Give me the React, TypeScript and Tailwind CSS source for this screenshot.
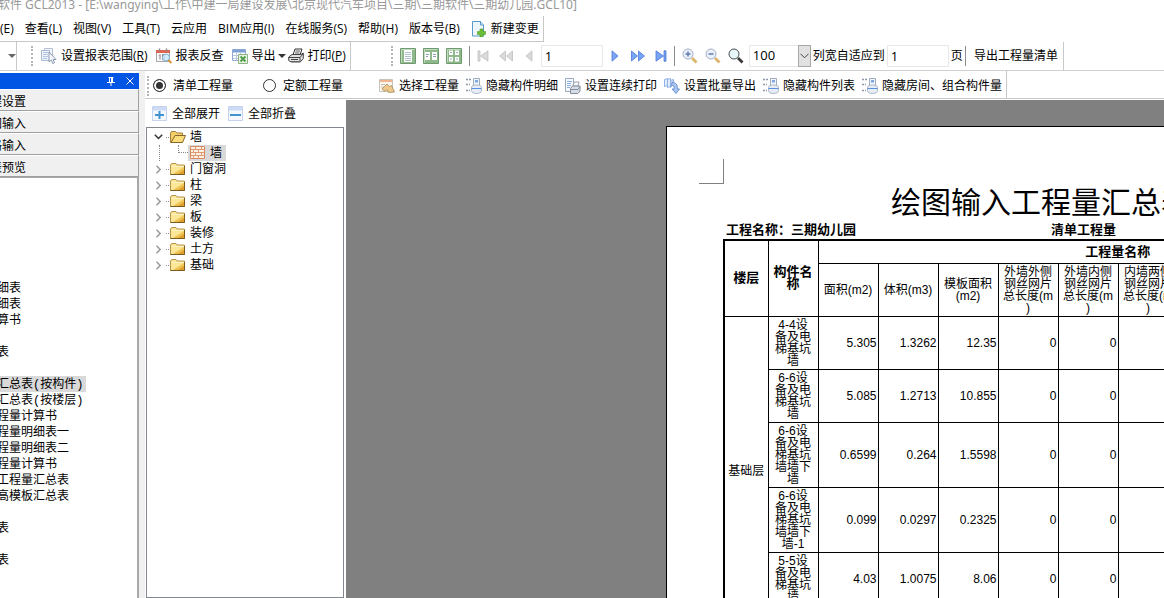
import { useState, type ReactNode } from 'react';
import { clsx } from 'clsx';

const MENU = ['(E)', '查看(L)', '视图(V)', '工具(T)', '云应用', 'BIM应用(I)', '在线服务(S)', '帮助(H)', '版本号(B)'];

const SECTIONS = ['程设置', '图输入', '格输入', '表预览'];

// Empty strings are the group headings, scrolled out to the left
const REPORTS = [
  '细表', '细表', '算书', '', '表', '', '汇总表(按构件)', '汇总表(按楼层)', '程量计算书', '程量明细表一',
  '程量明细表二', '程量计算书', '工程量汇总表', '高模板汇总表', '', '表', '', '表',
];

const TREE = ['门窗洞', '柱', '梁', '板', '装修', '土方', '基础'];

const COLUMNS = [
  '面积(m2)',
  '体积(m3)',
  '模板面积\n(m2)',
  '外墙外侧\n钢丝网片\n总长度(m\n)',
  '外墙内侧\n钢丝网片\n总长度(m\n)',
  '内墙两侧\n钢丝网片\n总长度(m\n)',
];

const ROWS = [
  { name: '4-4设\n备及电\n梯基坑\n墙', values: ['5.305', '1.3262', '12.35', '0', '0'] },
  { name: '6-6设\n备及电\n梯基坑\n墙', values: ['5.085', '1.2713', '10.855', '0', '0'] },
  { name: '6-6设\n备及电\n梯基坑\n墙墙下\n墙', values: ['0.6599', '0.264', '1.5598', '0', '0'] },
  { name: '6-6设\n备及电\n梯基坑\n墙墙下\n墙-1', values: ['0.099', '0.0297', '0.2325', '0', '0'] },
  { name: '5-5设\n备及电\n梯基坑\n墙', values: ['4.03', '1.0075', '8.06', '0', '0'] },
];

const DATA_COLUMNS = 10;

function Svg({ children, className = 'size-4' }: { children: ReactNode; className?: string }) {
  return (
    <svg viewBox="0 0 16 16" className={clsx('shrink-0', className)} fill="none" aria-hidden="true">
      {children}
    </svg>
  );
}

function RangeIcon() {
  return (
    <Svg>
      <path d="M3.500.5h8v9h-8z" fill="#f3f6fb" stroke="#b4c0d4" />
      <path d="M.5 2.500h8v10h-8z" fill="#eef3fa" stroke="#a9b8d0" />
      <path d="M2 4.500h5M2 6.500h5M2 8.500h5M2 10.500h4" stroke="#b3c5e2" />
      <path d="M8 4v10l2.200-2 1.500 3.500 1.800-.8-1.500-3.200h3z" fill="#f4f7fb" stroke="#8291ab" strokeWidth=".9" />
    </Svg>
  );
}

function ReviewIcon() {
  return (
    <Svg>
      <path d="M.5 2.500h13v11H.5z" fill="#fbfbfb" stroke="#a5a5a5" />
      <path d="M0 2h14v3H0z" fill="#e0654d" />
      <path d="M3.500.5v3M10.500.5v3" stroke="#8b8b8b" strokeWidth="1.500" />
      <path d="M3 7.500l1-1v5M6.500 6.500h2v5h-2z" stroke="#8e7575" />
      <circle cx="10" cy="9.500" r="3.500" fill="#cfeaf9" fillOpacity=".9" stroke="#7fb4d8" />
      <path d="M12.500 12l2.800 3" stroke="#dd9434" strokeWidth="2" />
    </Svg>
  );
}

function ExportIcon() {
  return (
    <Svg>
      <path d="M.5 1.500h13v11H.5z" fill="#fff" stroke="#8fa9d2" />
      <path d="M1 2h12v2.500H1z" fill="#7c9fd6" />
      <path d="M1 7.500h12M1 10.500h12M4.500 4.500v8M8.500 4.500v8" stroke="#b6c6e0" />
      <path d="M6.500 6.500h9v9h-9z" fill="#e9f4e4" stroke="#8bb47f" />
      <path d="M8.500 8.500l5 5M13.500 8.500l-5 5" stroke="#4f9a49" strokeWidth="1.800" />
    </Svg>
  );
}

function PrinterIcon() {
  return (
    <Svg>
      <path d="M5 7l2-6h7l-2 6z" fill="#fff" stroke="#333" />
      <path d="M7.500 3h4.500M7 5h4.500" stroke="#555" />
      <path d="M.7 9l3.300-2.500h9l2.300-1.500v5.500l-3 3.500h-9l-2.600-1.500z" fill="#e2e2e2" stroke="#444" />
      <path d="M1 9.500h11l3-3.500M12 9.500v4M3 11.500h7" stroke="#444" />
      <path d="M3 13.500h8" stroke="#666" />
    </Svg>
  );
}

function NewChangeIcon() {
  return (
    <Svg>
      <path d="M1.500.5h8l3 3.500v11h-11z" fill="#eef6fd" stroke="#5a9ac6" />
      <path d="M9.500.5V4h3" fill="#cfe3f3" stroke="#5a9ac6" />
      <path d="M9 8h3v2.500h2.500v3H12V16H9v-2.500H6.500v-3H9z" fill="#6cc038" stroke="#4c9a25" strokeWidth=".6" />
    </Svg>
  );
}

function PagesIcon({ layout }: { layout: 'one' | 'two' | 'four' }) {
  return (
    <Svg>
      <path d="M.5.5h15v15H.5z" fill="#8fb98b" stroke="#6f9a70" />
      <path d="M1.500 14.500v-13h13" stroke="#c3dcbf" />
      {layout === 'one' && (
        <>
          <path d="M4 2h8v12H4z" fill="#fff" />
          <path d="M5 4.500h6M5 6.500h6M5 8.500h6M5 10.500h6M5 12.500h6" stroke="#b0bdca" />
        </>
      )}
      {layout === 'two' && (
        <>
          <path d="M2 4h5v8H2zM9 4h5v8H9z" fill="#fff" />
          <path d="M3 6.500h3M3 8.500h2M10 6.500h3M10 8.500h3" stroke="#8c9cb0" />
        </>
      )}
      {layout === 'four' && (
        <>
          <path d="M3 2.500h4v4.500H3zM9 2.500h4v4.500H9zM3 9h4v4.500H3zM9 9h4v4.500H9z" fill="#fff" />
          <path d="M4 4.500h2M10 4.500h2M4 11h2M10 11h2" stroke="#9aabb8" />
        </>
      )}
    </Svg>
  );
}

function MagnifierIcon({ sign }: { sign?: 'plus' | 'minus' }) {
  return (
    <Svg>
      <path d="M10 10l4.500 4.500" stroke={sign ? '#d9b56e' : '#3a3a3a'} strokeWidth="2.800" />
      <circle cx="6" cy="6" r="5" fill={sign ? '#eaf1fb' : '#e9f7fb'} stroke={sign ? '#a3b0c6' : '#4a4f55'} />
      {sign && <path d="M3.500 6h5" stroke="#5b7bb0" strokeWidth="1.500" />}
      {sign === 'plus' && <path d="M6 3.500v5" stroke="#5b7bb0" strokeWidth="1.500" />}
    </Svg>
  );
}

function PickIcon() {
  return (
    <Svg>
      <path d="M.5 1.500h13v12H.5z" fill="#faf6ef" stroke="#c9c4ba" />
      <path d="M1 2h12v2H1z" fill="#f0b48c" />
      <path d="M2 6.500h4M2 9h3" stroke="#c8c0b0" />
      <path d="M3 11l5-5 2.500 2.500 2-1L15.500 14l-6 .5-1.500-3-2 2z" fill="#f0c98a" stroke="#a08a5c" strokeWidth=".8" />
    </Svg>
  );
}

function HideIcon() {
  return (
    <Svg>
      <path d="M0 1.500h2M3 1.500h2M0 6.500h2M3 6.500h1M0 12.500h2M3 12.500h1" stroke="#8d98a8" strokeWidth="1.500" />
      <path d="M7.500.5h6v7h-6z" fill="#f3f7fd" stroke="#9fabbf" />
      <path d="M9 2h3v2.500H9z" fill="#7fa6e4" />
      <path d="M5.500 9.500c0-2 2-2.500 5-2.500s5 .5 5 2.500v3c0 2-2 3-5 3s-5-1-5-3z" fill="#e6ecf6" stroke="#aab5c7" />
      <path d="M5.500 10.500h10" stroke="#5d90de" />
    </Svg>
  );
}

function ContinuousPrintIcon() {
  return (
    <Svg>
      <path d="M.5.5h8v13h-8z" fill="#f5f8fc" stroke="#9daabf" />
      <path d="M2 3.500h5M2 5.500h4M2 7.500h4M2 9.500h3" stroke="#8fafdd" />
      <path d="M8 8l1-4h5l-1 4z" fill="#fff" stroke="#9a9fa9" />
      <path d="M5.500 10.500l2-2.500h7.500v5l-2 2.500h-7.500z" fill="#d7dde6" stroke="#848d9c" />
      <path d="M6 11.500h7M13 11.500l2-3" stroke="#848d9c" />
    </Svg>
  );
}

function BatchExportIcon() {
  return (
    <Svg>
      <path d="M.5 1.500l3-1v7l-3 1zM3.500 1.500l3-1v8l-3 1z" fill="#e3edfb" stroke="#8fb0e4" />
      <path d="M6.500 2.500l3-1v5l-3 3z" fill="#c9dbf6" stroke="#8fb0e4" />
      <path d="M8 4.500c4-.5 5.500 2.500 5.500 6.500h2L12 15.500 8 11h2.200C10.200 8.500 9.500 7 7.500 7.500z" fill="#a9c6f2" stroke="#6d94d4" />
    </Svg>
  );
}

function ToggleAllIcon({ open }: { open: boolean }) {
  return (
    <Svg>
      <path d="M.5.5h14v14H.5z" fill="#f4f8fe" stroke="#c6d3ee" />
      <path d="M1 1h13v3.500H1z" fill="#cddaf6" />
      <path d={open ? 'M3 9h9' : 'M2 9h11'} stroke="#3f93cf" strokeWidth="2" />
      {open && <path d="M7.500 5v8" stroke="#3f93cf" strokeWidth="2" />}
    </Svg>
  );
}

function FolderIcon({ open = false }: { open?: boolean }) {
  return (
    <Svg>
      {open ? (
        <>
          <path d="M.5 13.500V4l1-1.500h4L7 4h5.500v3" fill="#f3d06c" stroke="#a5803a" />
          <path d="M1 13.500L5 6.500h10.500l-3 7z" fill="#fbdc7c" stroke="#8a6626" />
        </>
      ) : (
        <>
          <path d="M.5 4l1-1.500H6L7 4h7.500v9.500H.5z" fill="#fbe697" stroke="#b8924a" />
          <path d="M14 6v7H3z" fill="#f0c452" />
          <path d="M14 9v4H8z" fill="#dd9f2c" />
          <path d="M1 5.500h13" stroke="#fff3c0" />
          <path d="M.5 13.500h14V5" stroke="#7d5b1e" />
        </>
      )}
    </Svg>
  );
}

function BrickIcon() {
  return (
    <Svg>
      <path d="M.5 1.500h14v12H.5z" fill="#fdf1e6" stroke="#d98a60" />
      <path
        d="M1 4.500h13M1 7.500h13M1 10.500h13M5.500 2v2.500M11.500 2v2.500M3.500 4.500v3M8.500 4.500v3M5.500 7.500v3M11.500 7.500v3M3.500 10.500v3M8.500 10.500v3"
        stroke="#e09a72"
      />
    </Svg>
  );
}

function NavIcon({ kind, disabled = false }: { kind: 'end' | 'double' | 'single'; disabled?: boolean }) {
  const fill = disabled ? '#dadada' : '#7ba4f2';
  const stroke = disabled ? '#c2c2c2' : '#4678dc';
  return (
    <svg
      viewBox="0 0 16 12"
      className={clsx('h-3 w-4', disabled && '-scale-x-100')}
      fill={fill}
      stroke={stroke}
      strokeWidth=".8"
      aria-hidden="true"
    >
      {kind === 'single' && <path d="M5 .8L11 6l-6 5.200z" />}
      {kind === 'double' && <path d="M1.500 1L7.500 6l-6 5zM8.500 1l6 5-6 5z" />}
      {kind === 'end' && <path d="M3 .8L10.500 6 3 11.200zM11 .8h2v10.400h-2z" />}
    </svg>
  );
}

function Grip() {
  return <span className="h-5 w-0 shrink-0 border-l-2 border-dotted border-[#b4b4b4]" />;
}

function Separator() {
  return <span className="h-5 w-px shrink-0 bg-[#8c8c8c]" />;
}

function ToolButton({ icon, children }: { icon?: ReactNode; children: ReactNode }) {
  return (
    <button type="button" className="flex shrink-0 items-center gap-1 whitespace-nowrap">
      {icon}
      <span>{children}</span>
    </button>
  );
}

function IconButton({ label, children }: { label: string; children: ReactNode }) {
  return (
    <button type="button" aria-label={label} className="shrink-0">
      {children}
    </button>
  );
}

function MenuBar() {
  return (
    <nav className="flex h-[26px] w-fit items-center gap-[11px] border-r border-b border-[#c8c8c8] pr-1 whitespace-nowrap">
      {MENU.map((item) => (
        <button key={item} type="button">
          {item}
        </button>
      ))}
      <ToolButton icon={<NewChangeIcon />}>新建变更</ToolButton>
    </nav>
  );
}

function ReportToolbar() {
  const [page, setPage] = useState('1');
  const [fit, setFit] = useState('1');

  return (
    <div className="flex h-[29px] items-center border-b border-[#d0d0d0] whitespace-nowrap">
      <div className="flex h-full w-[17px] items-center justify-end border-r border-[#c8c8c8]">
        <button type="button" aria-label="更多" className="border-x-4 border-t-4 border-x-transparent border-t-[#666]" />
      </div>
      <div className="flex h-full items-center gap-2 border-r border-[#c8c8c8] pr-1 pl-[14px]">
        <Grip />
        <ToolButton icon={<RangeIcon />}>设置报表范围(<u>R</u>)</ToolButton>
        <ToolButton icon={<ReviewIcon />}>报表反查</ToolButton>
        <div className="flex items-center gap-[2px]">
          <ToolButton icon={<ExportIcon />}>导出</ToolButton>
          <span className="border-x-4 border-t-4 border-x-transparent border-t-[#333]" />
          <ToolButton icon={<PrinterIcon />}>打印(<u>P</u>)</ToolButton>
        </div>
      </div>
      <div className="flex h-full items-center gap-[5px] border-r border-[#c8c8c8] pr-[5px] pl-10">
        <div className="flex items-center gap-[7px]">
          <Grip />
          <IconButton label="单页"><PagesIcon layout="one" /></IconButton>
          <IconButton label="双页"><PagesIcon layout="two" /></IconButton>
          <IconButton label="多页"><PagesIcon layout="four" /></IconButton>
          <Separator />
        </div>
        <div className="flex items-center gap-1">
          <div className="flex items-center gap-[7px]">
            <IconButton label="首页"><NavIcon kind="end" disabled /></IconButton>
            <IconButton label="快退"><NavIcon kind="double" disabled /></IconButton>
            <IconButton label="上一页"><NavIcon kind="single" disabled /></IconButton>
          </div>
          <input
            aria-label="页码"
            value={page}
            onChange={(e) => setPage(e.target.value)}
            className="h-[22px] w-[62px] border border-[#e8e8e8] px-[3px] text-[13px] outline-none"
          />
          <div className="flex items-center gap-[7px]">
            <IconButton label="下一页"><NavIcon kind="single" /></IconButton>
            <IconButton label="快进"><NavIcon kind="double" /></IconButton>
            <IconButton label="末页"><NavIcon kind="end" /></IconButton>
          </div>
        </div>
        <div className="flex items-center gap-[7px]">
          <Separator />
          <IconButton label="放大"><MagnifierIcon sign="plus" /></IconButton>
          <IconButton label="缩小"><MagnifierIcon sign="minus" /></IconButton>
          <IconButton label="缩放"><MagnifierIcon /></IconButton>
        </div>
        <div className="flex items-center gap-[2px]">
          <div className="relative">
            <select
              aria-label="缩放比例"
              className="h-[22px] w-[62px] appearance-none border border-[#e8e8e8] px-[3px] text-[13px] outline-none"
            >
              <option>100</option>
            </select>
            <span className="pointer-events-none absolute top-0 right-0 flex h-[22px] w-[13px] items-center justify-center border border-[#a8a8a8] bg-[#e1e1e1]">
              <svg viewBox="0 0 9 6" className="h-[6px] w-[9px]" fill="none" stroke="#444">
                <path d="M.5.8l4 4 4-4" />
              </svg>
            </span>
          </div>
          <label htmlFor="fit-pages">列宽自适应到</label>
          <input
            id="fit-pages"
            value={fit}
            onChange={(e) => setFit(e.target.value)}
            className="h-[22px] w-[62px] border border-[#e8e8e8] px-[3px] text-[13px] outline-none"
          />
          <span>页</span>
          <div className="flex items-center gap-2">
            <Separator />
            <ToolButton>导出工程量清单</ToolButton>
          </div>
        </div>
      </div>
    </div>
  );
}

function QuantityToolbar() {
  const [kind, setKind] = useState('清单工程量');

  return (
    <div className="flex h-[28px] shrink-0 border-b border-[#c8c8c8] whitespace-nowrap">
      <div className="flex items-center gap-[7px] border-r border-[#c8c8c8] pt-[2px] pr-1 pl-[2px]">
        <div className="flex items-center gap-1">
          <Grip />
          <div className="flex w-[219px] gap-[30px]">
            {['清单工程量', '定额工程量'].map((name) => (
              <label key={name} className="flex items-center gap-[7px]">
                <input
                  type="radio"
                  name="kind"
                  checked={kind === name}
                  onChange={() => setKind(name)}
                  className="size-[13px] appearance-none rounded-full border border-[#333] bg-white checked:bg-[#333] checked:shadow-[inset_0_0_0_2px_#fff]"
                />
                <span>{name}</span>
              </label>
            ))}
          </div>
        </div>
        <ToolButton icon={<PickIcon />}>选择工程量</ToolButton>
        <ToolButton icon={<HideIcon />}>隐藏构件明细</ToolButton>
        <ToolButton icon={<ContinuousPrintIcon />}>设置连续打印</ToolButton>
        <ToolButton icon={<BatchExportIcon />}>设置批量导出</ToolButton>
        <ToolButton icon={<HideIcon />}>隐藏构件列表</ToolButton>
        <ToolButton icon={<HideIcon />}>隐藏房间、组合构件量</ToolButton>
      </div>
    </div>
  );
}

function NavigationPanel() {
  const [selected, setSelected] = useState(6);

  return (
    <aside className="flex w-[139px] shrink-0 flex-col overflow-hidden pt-[2px]">
      <div className="flex h-4 shrink-0 items-center justify-end gap-[11px] bg-[#0055e5] pr-[5px] text-white">
        <IconButton label="固定">
          <svg viewBox="0 0 8 9" className="h-[9px] w-2" fill="none" stroke="currentColor">
            <path d="M1.500.5h5M2.500.5v4.500M5.500.5v4.500M4.500.5v4.500M0 5.500h8M4 6v3" />
          </svg>
        </IconButton>
        <IconButton label="关闭">
          <svg viewBox="0 0 8 8" className="size-2" fill="none" stroke="currentColor">
            <path d="M.5.5l7 7M7.500.5l-7 7" />
          </svg>
        </IconButton>
      </div>
      {SECTIONS.map((name) => (
        <button
          key={name}
          type="button"
          className="h-[22px] shrink-0 border-t border-r border-b border-t-white border-r-[#a0a0a0] border-b-[#a0a0a0] bg-[#f0f0f0] pt-[3px] text-left"
        >
          <span className="-ml-[10px]">{name}</span>
        </button>
      ))}
      <ul className="grow border-t border-r-2 border-[#a8a8a8] bg-white pt-[102px]">
        {REPORTS.map((name, i) => (
          <li key={i} className="h-4">
            {name && (
              <button
                type="button"
                onClick={() => setSelected(i)}
                className={clsx(
                  '-ml-[3px] block h-4 pr-[3px] font-["Liberation_Mono","Noto_Sans_CJK_SC",monospace] leading-[18px]',
                  i === selected && 'bg-[#d9d9d9]',
                )}
              >
                {name}
              </button>
            )}
          </li>
        ))}
      </ul>
    </aside>
  );
}

function ComponentTree() {
  return (
    <div className="flex w-[199px] shrink-0 flex-col">
      <div className="flex h-[28px] shrink-0 items-center gap-2 pt-[2px] pl-[7px]">
        <ToolButton icon={<ToggleAllIcon open />}>全部展开</ToolButton>
        <ToolButton icon={<ToggleAllIcon open={false} />}>全部折叠</ToolButton>
      </div>
      <ul className="ml-px grow border border-[#828790] bg-white pt-px">
        <li>
          <button type="button" className="flex h-4 items-center pl-[7px]">
            <svg viewBox="0 0 9 6" className="h-[6px] w-[9px]" fill="none" stroke="#333" strokeWidth="1.500">
              <path d="M.8.8l3.700 3.700L8.200.8" />
            </svg>
            <span className="mr-px ml-[3px] w-[3px] border-t border-dotted border-[#888]" />
            <FolderIcon open />
            <span className="ml-1">墙</span>
          </button>
          <div className="ml-3 flex h-4 items-center border-l border-dotted border-[#888] pl-[18px]">
            <span className="mb-2 h-2 w-[10px] border-b border-l border-dotted border-[#888]" />
            <button type="button" className="flex h-4 items-center bg-[#d9d9d9] pl-[2px]">
              <BrickIcon />
              <span className="px-1">墙</span>
            </button>
          </div>
        </li>
        {TREE.map((name) => (
          <li key={name}>
            <button type="button" className="flex h-4 items-center pl-[7px]">
              <svg viewBox="0 0 9 9" className="size-[9px]" fill="none" stroke="#9a9a9a" strokeWidth="1.500">
                <path d="M2.500.8l3.700 3.700-3.700 3.700" />
              </svg>
              <span className="mr-px ml-[3px] w-[3px] border-t border-dotted border-[#888]" />
              <FolderIcon />
              <span className="ml-1">{name}</span>
            </button>
          </li>
        ))}
      </ul>
    </div>
  );
}

function ReportTable() {
  return (
    <table className="w-[694px] table-fixed border-collapse border-2 border-black text-center leading-3">
      <colgroup>
        <col className="w-[44px]" />
        <col className="w-[50px]" />
        {Array.from({ length: DATA_COLUMNS }, (_, i) => (
          <col key={i} className="w-[60px]" />
        ))}
      </colgroup>
      <thead>
        <tr className="h-[23px] text-[13px] font-bold">
          <th rowSpan={2} className="border border-black p-0">楼层</th>
          <th rowSpan={2} className="border border-black p-0 whitespace-pre">{'构件名\n称'}</th>
          <th colSpan={DATA_COLUMNS} className="border border-black p-0">工程量名称</th>
        </tr>
        <tr className="h-[53px]">
          {Array.from({ length: DATA_COLUMNS }, (_, i) => (
            <th key={i} className="border border-black p-0 font-normal whitespace-pre">
              {COLUMNS[i]}
            </th>
          ))}
        </tr>
      </thead>
      <tbody>
        {ROWS.map((row, r) => (
          <tr key={r}>
            {r === 0 && <td rowSpan={ROWS.length + 1} className="border border-black p-0">基础层</td>}
            <td className="border border-black p-0 py-[2px] whitespace-pre">{row.name}</td>
            {Array.from({ length: DATA_COLUMNS }, (_, i) => (
              <td key={i} className="border border-black p-0 pr-px text-right">
                {row.values[i]}
              </td>
            ))}
          </tr>
        ))}
        <tr className="h-[22px]">
          <td colSpan={DATA_COLUMNS + 1} className="border border-black p-0" />
        </tr>
      </tbody>
    </table>
  );
}

function ReportPreview() {
  return (
    <main className="mt-px ml-[2px] grow overflow-hidden bg-[#808080] pt-[26px] pl-[320px]">
      <div className="w-[810px] border border-black bg-white pt-8 pl-8 font-['Liberation_Sans','Noto_Sans_CJK_SC',sans-serif]">
        <div className="h-[25px] w-[25px] border-r border-b border-[#808080]" />
        <div className="pl-6">
          <h1 className="pt-[2px] pl-[168px] font-['Liberation_Serif','Noto_Sans_CJK_SC',serif] text-[30px] leading-[34px]">绘图输入工程量汇总表</h1>
          <div className="flex h-[19px] gap-[195px] pl-[3px] text-[13px] leading-5 font-bold">
            <span>工程名称：三期幼儿园</span>
            <span>清单工程量</span>
          </div>
          <ReportTable />
        </div>
      </div>
    </main>
  );
}

export default function App() {
  return (
    <div className="flex h-screen flex-col overflow-hidden bg-white font-['Open_Sans','Noto_Sans_CJK_SC',sans-serif] text-xs text-black">
      <header className="shrink-0">
        <div className="flex h-4 items-start overflow-hidden font-['Noto_Sans','Noto_Sans_CJK_SC',sans-serif] leading-[9px] whitespace-nowrap text-[#999]">
          <span className="-ml-[2px]">
            软件 GCL2013 - [E:\wangying\工作\中建一局建设发展\北京现代汽车项目\三期\三期软件\三期幼儿园.GCL10]
          </span>
        </div>
        <MenuBar />
        <ReportToolbar />
      </header>
      <div className="flex min-h-0 grow">
        <NavigationPanel />
        <div className="w-[6px] shrink-0 bg-[#f0f0f0]" />
        <div className="flex min-w-0 grow flex-col">
          <QuantityToolbar />
          <div className="flex min-h-0 grow">
            <ComponentTree />
            <ReportPreview />
          </div>
        </div>
      </div>
    </div>
  );
}
